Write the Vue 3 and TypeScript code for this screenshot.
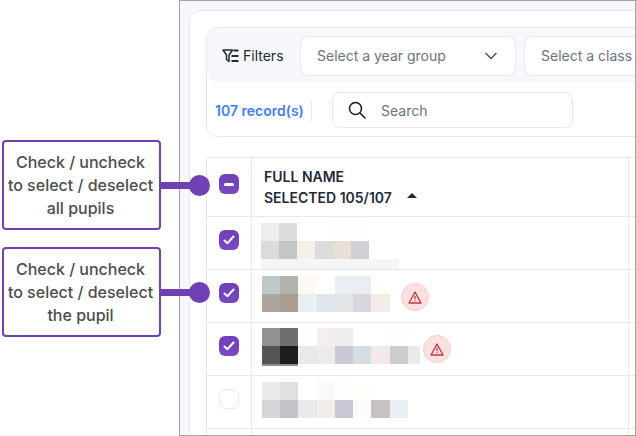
<script setup lang="ts">
type Cell = [string, number?];
interface Row {
  checked: boolean;
  shift: number;
  top: number;
  gap: number;
  warn: boolean;
  lines: { h: number; cells: Cell[] }[];
}
const rows: Row[] = [
  {
    checked: true, shift: 9, top: 6, gap: 0, warn: false,
    lines: [
      { h: 18, cells: [['#ededed'], ['#dbdcdd'], ['#fff'], ['#fff'], ['#fffefd'], ['#fefefe']] },
      { h: 18, cells: [['#dadbdc'], ['#c4c5c7'], ['#f5f0ea'], ['#dcdcdc'], ['#e8e0d8'], ['#d0cfd4']] },
      { h: 10, cells: [['#f5f5f7', 138]] },
    ],
  },
  {
    checked: true, shift: 10, top: 6, gap: 11, warn: true,
    lines: [
      { h: 18, cells: [['#bfc8c8'], ['#b3b2ad'], ['#fdf9f4', 19], ['#fff'], ['#e9edf4'], ['#e9edf4']] },
      { h: 18, cells: [['#aea5a0'], ['#a89c93'], ['#e9eef1', 19], ['#e0e4ec'], ['#e1e5e7'], ['#d7d6dc'], ['#f3ece6', 19]] },
    ],
  },
  {
    checked: true, shift: 10, top: 5, gap: 3, warn: true,
    lines: [
      { h: 18, cells: [['#919191'], ['#6f6f6f'], ['#fefefa', 19], ['#f4efee'], ['#eeeeee'], ['#fff'], ['#fff', 19], ['#fefcfd']] },
      { h: 18, cells: [['#555555'], ['#1d1d1d'], ['#e8e9ea', 19], ['#ebecea'], ['#c9cad6'], ['#d3dde2'], ['#f3e9e8', 19], ['#cdcdcd'], ['#e9ebe9', 12]] },
      { h: 2, cells: [['#8f8f8f', 36]] },
    ],
  },
  {
    checked: false, shift: 10, top: 6, gap: 0, warn: false,
    lines: [
      { h: 18, cells: [['#e8e9ea'], ['#dfe0e1'], ['#fff', 19], ['#fbf9fa'], ['#fdfdfd'], ['#fefefb']] },
      { h: 18, cells: [['#d4d5d6'], ['#c2c3c6'], ['#e8e9ec', 19], ['#f2efeb'], ['#c7c8d4'], ['#fdfcf8'], ['#c6c2c1', 19], ['#eaeff3']] },
    ],
  },
];
const notes = [
  { cls: 'note-all', text: ['Check / uncheck', 'to select / deselect', 'all pupils'] },
  { cls: 'note-one', text: ['Check / uncheck', 'to select / deselect', 'the pupil'] },
];
</script>

<template>
  <div class="page">
    <div class="frame">
      <div class="card">
        <section class="toolbar">
          <div class="filters">
            <div class="filter-label">
              <svg width="17" height="16" viewBox="0 0 17 16" fill="none" stroke="#1f2937" stroke-width="1.5">
                <path d="M1 2h9.500L7 7v6.500L4.500 11.500V7z" stroke-linejoin="round" />
                <path d="M11.500 2.500h5M9.500 8h7M9.500 13h7" stroke-width="2" />
              </svg>
              <span>Filters</span>
            </div>
            <div class="select year">
              <span>Select a year group</span>
              <svg width="12" height="8" viewBox="0 0 12 8" fill="none" stroke="#4b5563" stroke-width="1.500">
                <path d="M1 1.500l5 5 5-5" stroke-linecap="round" stroke-linejoin="round" />
              </svg>
            </div>
            <div class="select klass"><span>Select a class</span></div>
          </div>
          <div class="records">
            <span class="count">107 record(s)</span>
            <span class="divider"></span>
            <div class="search">
              <svg width="18" height="18" viewBox="0 0 18 18" fill="none" stroke="#111827" stroke-width="1.500">
                <circle cx="7.500" cy="7.500" r="6" />
                <path d="M12 12l5 5" stroke-linecap="round" />
              </svg>
              <span>Search</span>
            </div>
          </div>
        </section>

        <section class="table">
          <div class="head">
            <div class="check-cell">
              <span class="box on">
                <span class="minus"></span>
              </span>
            </div>
            <div class="name-head">
              <div>FULL NAME</div>
              <div class="selected">SELECTED 105/107<span class="caret"></span></div>
            </div>
            <div class="tail"></div>
          </div>
          <div v-for="(row, i) in rows" :key="i" class="row">
            <div class="check-cell">
              <span class="box" :class="{ on: row.checked }">
                <svg v-if="row.checked" width="12" height="10" viewBox="0 0 12 10" fill="none" stroke="#fff" stroke-width="2">
                  <path d="M1.500 5.500L4.500 8.200L10.500 1.500" stroke-linecap="round" stroke-linejoin="round" />
                </svg>
              </span>
            </div>
            <div class="name-cell" :style="{ paddingLeft: row.shift + 'px', paddingTop: row.top + 'px' }">
              <div class="mosaic">
                <div v-for="(line, l) in row.lines" :key="l" class="line" :style="{ height: line.h + 'px' }">
                  <span
                    v-for="(cell, c) in line.cells"
                    :key="c"
                    :style="{ width: (cell[1] ?? 18) + 'px', background: cell[0] }"
                  ></span>
                </div>
              </div>
              <span v-if="row.warn" class="warn" :style="{ marginLeft: row.gap + 'px' }">
                <svg width="14" height="13" viewBox="0 0 14 13" fill="none" stroke="#c0343c" stroke-width="1.300">
                  <path d="M7 1L13 12H1z" stroke-linejoin="round" />
                  <path d="M7 4.800v3.400M7 9.300v1" />
                </svg>
              </span>
            </div>
            <div class="tail"></div>
          </div>
          <div class="row">
            <div class="check-cell"></div>
            <div class="name-cell"></div>
            <div class="tail"></div>
          </div>
        </section>
      </div>
    </div>

    <div v-for="note in notes" :key="note.cls" class="note" :class="note.cls">
      <div class="note-box">
        <div v-for="t in note.text" :key="t">{{ t }}</div>
      </div>
      <span class="note-line"></span>
      <span class="note-dot"></span>
    </div>
  </div>
</template>

<style>
html, body { margin: 0; background: #fff; }
</style>

<style scoped>
.page {
  position: relative;
  width: 636px;
  height: 436px;
  overflow: hidden;
  padding-left: 179px;
  box-sizing: border-box;
  font-family: Inter, "Liberation Sans", sans-serif;
  background: #fff;
}
.frame {
  width: 457px;
  height: 436px;
  box-sizing: border-box;
  border: 1px solid #a3a3a3;
  background: #f7f8fb;
  padding: 9px 0 0 9px;
  overflow: hidden;
}
.card {
  width: 620px;
  height: 600px;
  box-sizing: border-box;
  background: #fff;
  border: 1px solid #e8e8ec;
  border-radius: 12px;
  padding: 16px;
}
.toolbar {
  width: 560px;
  box-sizing: border-box;
  height: 110px;
  border: 1px solid #e8e8ec;
  border-radius: 12px;
}
.filters {
  height: 55px;
  box-sizing: border-box;
  background: #f7f8fb;
  border-radius: 11px;
  display: flex;
  align-items: center;
  gap: 8px;
  padding-left: 15px;
}
.filter-label {
  display: flex;
  align-items: center;
  gap: 4px;
  width: 70px;
  font-size: 14px;
  font-weight: 400;
  color: #1f2937;
}
.select {
  height: 40px;
  box-sizing: border-box;
  flex: none;
  background: #fff;
  border: 1px solid #e8e8ec;
  border-radius: 8px;
  padding: 0 18px 0 16px;
  display: flex;
  align-items: center;
  justify-content: space-between;
  font-size: 14px;
  color: #6b7280;
}
.year { width: 216px; }
.klass { width: 200px; }
.records {
  height: 54px;
  display: flex;
  align-items: center;
  padding-left: 8px;
}
.count {
  width: 96px;
  flex: none;
  font-size: 14px;
  font-weight: 600;
  color: #3f7ef5;
}
.divider {
  width: 1px;
  height: 21px;
  background: #e8e8ec;
  margin-right: 20px;
  flex: none;
}
.search {
  width: 241px;
  height: 36px;
  box-sizing: border-box;
  border: 1px solid #e8e8ec;
  border-radius: 8px;
  padding-left: 15px;
  display: flex;
  align-items: center;
  gap: 15px;
  font-size: 14px;
  color: #6b7280;
}
.table {
  margin-top: 20px;
  width: 560px;
  border-left: 1px solid #e8e8ec;
  border-top: 1px solid #e8e8ec;
}
.head, .row {
  display: flex;
  border-bottom: 1px solid #e8e8ec;
  box-sizing: border-box;
}
.head { height: 59px; }
.row { height: 53px; }
.check-cell {
  width: 45px;
  flex: none;
  box-sizing: border-box;
  border-right: 1px solid #e8e8ec;
  padding: 13px 0 0 12px;
}
.head .check-cell { padding-top: 16px; }
.box {
  display: flex;
  align-items: center;
  justify-content: center;
  width: 20px;
  height: 20px;
  box-sizing: border-box;
  border-radius: 6px;
  background: #fff;
  border: 1px solid #e8e8ec;
}
.box.on {
  border: 0;
  background: linear-gradient(180deg, #6f3fb8, #7a4ac0);
}
.minus {
  width: 10px;
  height: 3px;
  border-radius: 2px;
  background: #fff;
}
.name-head {
  width: 376px;
  flex: none;
  box-sizing: border-box;
  padding: 8px 0 0 12px;
  font-size: 14px;
  font-weight: 600;
  line-height: 21px;
  color: #1f2937;
}
.selected {
  display: flex;
  align-items: center;
}
.caret {
  width: 0;
  height: 0;
  margin-left: 15px;
  margin-top: -4px;
  border-left: 5px solid transparent;
  border-right: 5px solid transparent;
  border-bottom: 5px solid #1f2937;
}
.name-cell {
  width: 376px;
  flex: none;
  box-sizing: border-box;
  display: flex;
  align-items: flex-start;
  align-self: stretch;
}
.mosaic {
  display: flex;
  flex-direction: column;
}
.line {
  display: flex;
}
.line span {
  display: block;
  flex: none;
}
.warn {
  flex: none;
  width: 28px;
  height: 28px;
  margin-top: 7px;
  box-sizing: border-box;
  border-radius: 50%;
  background: #fde0e0;
  border: 1px solid #fbcaca;
  display: flex;
  align-items: center;
  justify-content: center;
}
.tail {
  flex: 1;
  border-left: 1px solid #e8e8ec;
}
.note {
  position: absolute;
  left: 2px;
  display: flex;
  align-items: center;
}
.note-all { top: 140px; }
.note-one { top: 247px; }
.note-box {
  width: 159px;
  height: 90px;
  box-sizing: border-box;
  border: 2px solid #7041b3;
  border-radius: 4px;
  background: #fff;
  padding-right: 2px;
  display: flex;
  flex-direction: column;
  align-items: center;
  justify-content: center;
  font-size: 16px;
  font-weight: 500;
  line-height: 23px;
  color: #4d4d4d;
  white-space: nowrap;
}
.note-line {
  width: 30px;
  height: 7px;
  background: #7041b3;
  margin-left: -1px;
}
.note-dot {
  width: 21px;
  height: 21px;
  margin-left: -1px;
  border-radius: 50%;
  background: #7041b3;
}
</style>
